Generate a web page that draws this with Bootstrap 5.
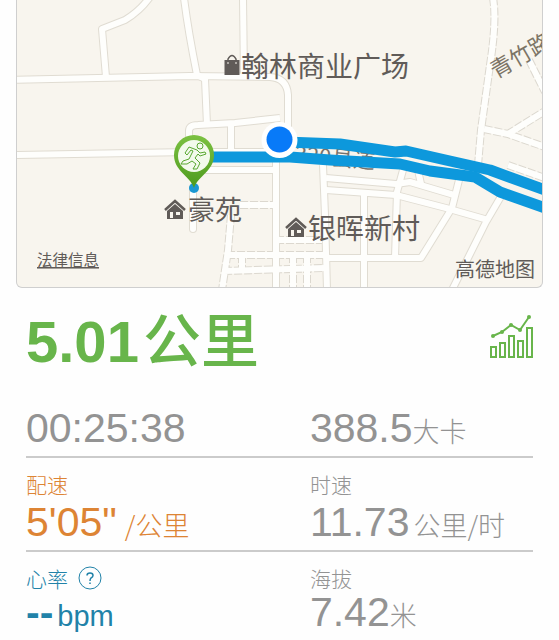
<!DOCTYPE html>
<html lang="zh-CN">
<head>
<meta charset="utf-8">
<meta name="viewport" content="width=device-width, initial-scale=1">
<title>跑步记录</title>
<link href="https://cdn.jsdelivr.net/npm/bootstrap@5.3.0/dist/css/bootstrap.min.css" rel="stylesheet">
<style>
body { font-family: "Liberation Sans", "Noto Sans CJK SC", sans-serif; color: #939393; background: #fefefe; }
.map-frame { margin: 0 16px; border: 1px solid #cfcfcf; border-top: 0; border-radius: 0 0 6px 6px; background: #f8f5ee; overflow: hidden; }
.map-frame svg { display: block; width: 100%; height: auto; }
.map-frame text { font-family: "Noto Sans CJK SC", sans-serif; }
.run-stats { padding: 0 26px; }
.run-head { padding: 20px 0 34px; color: #68b54b; }
.distance { font-size: 58px; line-height: 60px; font-weight: 700; }
.distance span { font-family: "Noto Sans CJK SC", sans-serif; font-size: 58px; line-height: 1; font-weight: 500; }
.chart-btn { color: #68b54b; }
.metric-row { border-bottom: 2px solid #cbcbcb; padding-bottom: 6px; }
.metric-row + .metric-row { padding-top: 14px; }
.metric-row:last-child { border-bottom: 0; }
.metric-main { flex: 0 0 56%; }
.metric-name { font-family: "Noto Sans CJK SC", sans-serif; font-size: 21px; line-height: 24px; font-weight: 300; }
.metric-value { font-size: 41px; line-height: 44px; white-space: nowrap; }
.metric-value span { font-family: "Noto Sans CJK SC", sans-serif; font-size: 27px; line-height: 1; font-weight: 300; }
.metric-value .bpm { font-family: "Liberation Sans", sans-serif; font-size: 29px; font-weight: 400; }
.pace { color: #dd8434; }
.heart { color: #2182a8; }
</style>
<script src="https://cdn.jsdelivr.net/npm/bootstrap@5.3.0/dist/js/bootstrap.bundle.min.js"></script>
</head>
<body>
<section class="map-frame">
<svg viewBox="17 0 525 287" role="img" aria-label="跑步路线地图">
  <defs>
    <linearGradient id="pinFill" x1="0" y1="0" x2="0" y2="1"><stop offset="0" stop-color="#7cc142"/><stop offset="1" stop-color="#4d9a1d"/></linearGradient>
    <g id="streets" fill="none" stroke-linejoin="round">
      <path d="M10 80 L190 76 L270 77 Q287 78 288 95 V130"/>
      <path d="M106 77 L102 29 L125 20 Q140 11 150 -3"/>
      <path d="M184 -2 Q188 30 197 75 L205 79 L207 125"/>
      <path d="M243 -2 L244 77"/>
      <path d="M189 152 V131 Q189 125 198 125 L235 123 L280 118"/>
      <path d="M231 124 V152"/>
      <path d="M10 155 L190 152 H280"/>
      <path d="M205 170 H276"/>
      <path d="M276 155 V290"/>
      <path d="M193 188 V229" stroke-linecap="round"/>
      <path d="M323 165 L325 215 L327 290"/>
      <path d="M326 190 L396 195 L446 208 L488 220"/>
      <path d="M326 178 L396 184 L410 182 L454 195"/>
      <path d="M364 195 V290"/>
      <path d="M403 170 L397 192 L395 258"/>
      <path d="M418 170 L421 184"/>
      <path d="M327 258 H421 L452 208 L459 180"/>
      <path d="M452 290 L486 222 L503 193"/>
    </g>
    <g id="lanes" fill="none" stroke-linejoin="round">
      <path d="M493 -2 Q497 20 490 65 L481 130 L478 165"/>
      <path d="M484 129 L508 134 L545 147 M508 134 L545 111 M529 60 L545 92 M508 165 L545 178"/>
      <path d="M240 205 H276 M231 215 L228 250 L222 290 M227 255 H275 M224 271 L325 268 M276 255 H325 M276 240 H322"/>
      <path d="M242 255 V270 M293 255 V290 M307 255 V290"/>
    </g>
  </defs>
  <use href="#lanes" stroke="#dcd8cf" stroke-width="8" stroke-dasharray="8 2"/>
  <use href="#streets" stroke="#e0dcd2" stroke-width="8"/>
  <use href="#lanes" stroke="#fefefc" stroke-width="6"/>
  <use href="#streets" stroke="#fefefc" stroke-width="6"/>
  <text transform="translate(294 162) rotate(5)" fill="#77726c" font-size="22">320县道</text>
  <g fill="none" stroke="#0d98dc" stroke-width="11" stroke-linejoin="round">
    <path d="M285 142 L340 144 L395 152 L406 151 L450 161 L490 170 L545 190"/>
    <path d="M210 157 L290 157 L330 160 L400 164 L430 171 L475 177 L500 192 L545 208"/>
  </g>
  <circle cx="194" cy="188" r="5" fill="#1a98d2"/>
  <path d="M194 188 C190 176 174 171 174 155 A20 20 0 0 1 214 155 C214 171 198 176 194 188Z" fill="url(#pinFill)"/>
  <circle cx="194" cy="156" r="16" fill="#f3faec"/>
  <g fill="none" stroke="#59a831" stroke-width="1" stroke-linejoin="round">
    <circle cx="200" cy="146" r="3"/>
    <path d="M197 150 L189 147 L185 153 L187 155 L191 150 L193 151 L189 159 L183 161 L181 164 L187 164 L192 161 L196 164 L193 169 L197 169 L200 163 L195 158 L198 154 L200 156 L206 154 L205 152 L200 153 Z"/>
  </g>
  <circle cx="279.500" cy="140" r="18" fill="#fff"/>
  <circle cx="279.500" cy="139.500" r="13" fill="#087af8"/>
  <g fill="#605b58">
    <path d="M224.500 60 H239.500 V75 H224.500Z"/>
    <path d="M228 61 V59 Q232 52 236 59 V61" fill="none" stroke="#605b58" stroke-width="1.500"/>
    <path d="M228 62 V64 M236 62 V64" stroke="#f8f5ee"/>
    <text x="241" y="77" font-size="28">翰林商业广场</text>
    <text x="188" y="220" font-size="27">豪苑</text>
    <text x="308" y="239" font-size="28">银晖新村</text>
    <text x="37" y="266" font-size="15.500" text-decoration="underline">法律信息</text>
    <text x="455" y="277" font-size="20">高德地图</text>
    <text transform="translate(496 79) rotate(-30)" font-size="22" fill="#7c7466">青竹路</text>
    <g id="house"><path d="M165 210 L175 201 L185 210" fill="none" stroke="#605b58" stroke-width="2.500"/><path fill-rule="evenodd" d="M167 211 L175 204 L183 211 V219 H167Z M170 212 H173 V218 H170Z M176 212 H180 V215 H176Z"/></g>
    <use href="#house" x="121" y="18"/>
  </g>
</svg>
</section>
<main class="run-stats">
  <header class="run-head d-flex justify-content-between align-items-start">
    <h1 class="distance m-0">5.01<span class="ms-1">公里</span></h1>
    <button type="button" class="chart-btn btn p-0 border-0 mt-1" aria-label="图表">
      <svg width="46" height="48" viewBox="0 0 46 48" fill="none" stroke="currentColor" stroke-width="2" aria-hidden="true">
        <path d="M4 35h5v10H4zM13 31h5v14h-5zM22 24h5v21h-5zM31 29h5v16h-5zM40 16h5v29h-5z"/>
        <path d="M6 24 L15 20 L24 13 L33 18 L42 5"/>
        <g fill="currentColor" stroke="none"><circle cx="6" cy="24" r="2"/><circle cx="15" cy="20" r="2"/><circle cx="24" cy="13" r="2"/><circle cx="33" cy="18" r="2"/><circle cx="42" cy="5" r="2"/></g>
      </svg>
    </button>
  </header>
  <div class="metric-row d-flex">
    <div class="metric-main metric-value">00:25:38</div>
    <div class="metric-value">388.5<span>大卡</span></div>
  </div>
  <div class="metric-row d-flex">
    <div class="metric-main pace">
      <div class="metric-name mb-1">配速</div>
      <div class="metric-value">5'05"<span class="ms-2">/公里</span></div>
    </div>
    <div>
      <div class="metric-name mb-1">时速</div>
      <div class="metric-value">11.73<span class="ms-1">公里/时</span></div>
    </div>
  </div>
  <div class="metric-row d-flex">
    <div class="metric-main heart">
      <div class="metric-name d-flex align-items-center">心率
        <button type="button" class="heart btn p-0 border-0 ms-2 d-flex" aria-label="心率说明">
          <svg width="28" height="24" viewBox="0 0 28 24" fill="none" stroke="currentColor" aria-hidden="true"><circle cx="14" cy="12" r="11"/><path d="M11 9.500 Q11 7 14 7 Q17 7 17 9.500 Q17 11 15 12 Q14 13 14 15 M14 16.500 V18" stroke-width="1.500"/></svg>
        </button>
      </div>
      <div class="metric-value"><b>--</b><span class="bpm ms-1">bpm</span></div>
    </div>
    <div>
      <div class="metric-name">海拔</div>
      <div class="metric-value">7.42<span>米</span></div>
    </div>
  </div>
</main>
</body>
</html>
